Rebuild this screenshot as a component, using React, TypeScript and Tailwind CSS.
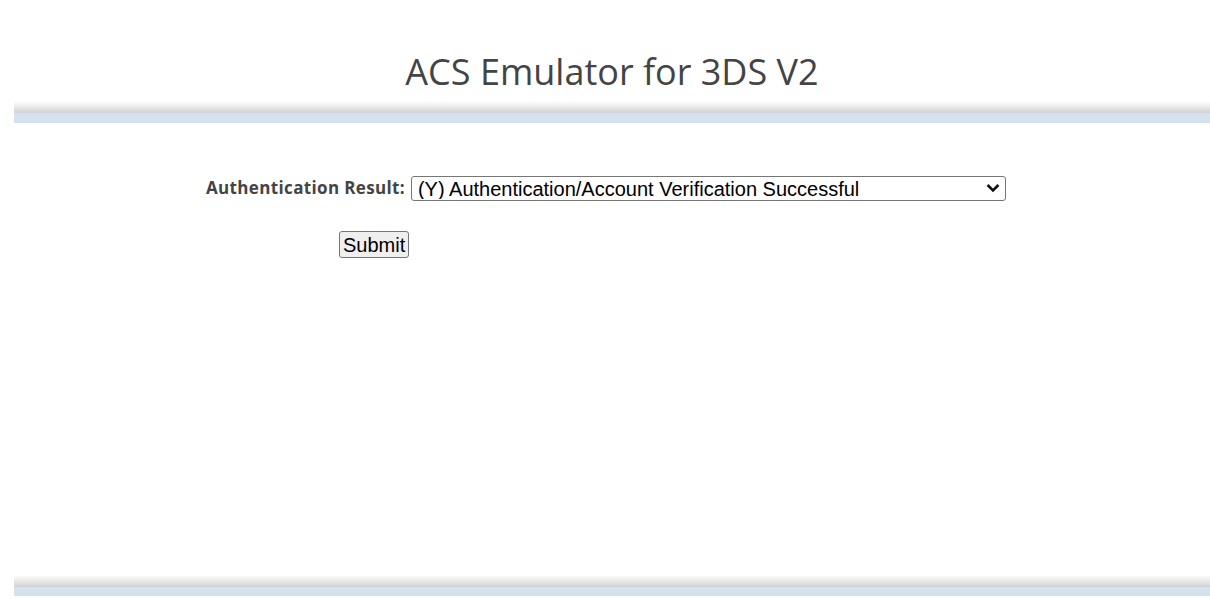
import React from "react";

export default function App() {
  return (
    <div className="min-h-[610px] bg-white pl-[14px]" style={{ fontFamily: '"Open Sans", "DejaVu Sans", sans-serif' }}>
      <div className="flex h-[101px] items-end justify-center pb-[11px]">
        <h1 className="text-[36px] leading-none text-[#444444]">ACS Emulator for 3DS V2</h1>
      </div>
      <div className="h-[12px] bg-gradient-to-b from-white to-[#d2d2d2]" />
      <div className="h-[10px] bg-[#d4e1ee]" />
      <div className="flex h-[452px] flex-col pt-[53px]">
        <div className="flex h-[25px] items-center pl-[192px]">
          <label className="mb-[2px] mr-[6px] text-[17px] font-bold leading-none tracking-[0.35px] text-[#444444]">Authentication Result:</label>
          <div className="relative">
            <select
              className="block h-[25px] w-[595px] appearance-none rounded-[3px] border border-[#767676] bg-white py-0 pl-[6px] text-[20px] leading-none text-black"
              style={{ fontFamily: '"Liberation Sans", Arial, sans-serif' }}
              defaultValue="Y"
            >
              <option value="Y">(Y) Authentication/Account Verification Successful</option>
            </select>
            <svg
              className="pointer-events-none absolute right-[6px] top-[7px]"
              width="14"
              height="10"
              viewBox="0 0 14 10"
            >
              <path d="M1.6 2 L7 7.4 L12.4 2" fill="none" stroke="#111" strokeWidth="2.6" />
            </svg>
          </div>
        </div>
        <div className="pl-[325px] pt-[30px]">
          <button
            className="h-[27px] rounded-[3px] border border-[#767676] bg-[#efefef] px-[3px] text-[20px] leading-none text-black"
            style={{ fontFamily: '"Liberation Sans", Arial, sans-serif' }}
          >
            Submit
          </button>
        </div>
      </div>
      <div className="h-[12px] bg-gradient-to-b from-white to-[#d2d2d2]" />
      <div className="h-[9px] bg-[#d4e1ee]" />
    </div>
  );
}
